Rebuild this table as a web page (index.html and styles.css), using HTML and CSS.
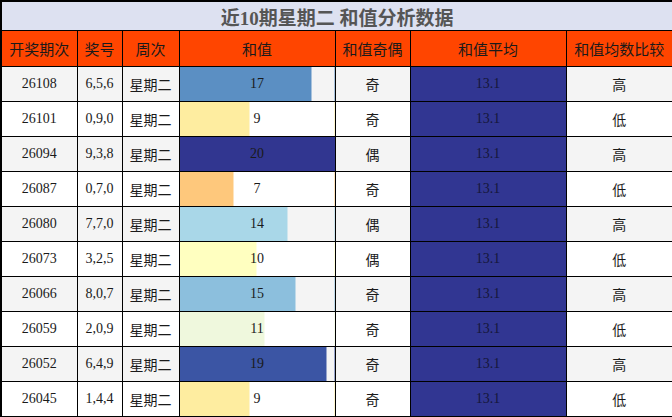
FILE: index.html
```html
<!DOCTYPE html>
<html lang="zh-CN">
<head>
<meta charset="utf-8">
<title>近10期星期二 和值分析数据</title>
<link rel="stylesheet" href="styles.css">
</head>
<body>
<table class="stats">
  <colgroup>
    <col class="c-issue"><col class="c-nums"><col class="c-week"><col class="c-sum"><col class="c-odd"><col class="c-avg"><col class="c-cmp">
  </colgroup>
  <thead>
    <tr class="title-row"><th colspan="7">近10期星期二 和值分析数据</th></tr>
    <tr class="head-row">
      <th>开奖期次</th><th>奖号</th><th>周次</th><th>和值</th><th>和值奇偶</th><th>和值平均</th><th>和值均数比较</th>
    </tr>
  </thead>
  <tbody>
    <tr><td>26108</td><td>6,5,6</td><td>星期二</td><td class="sum" style="--w:85%;--c:#5b8fc3">17</td><td>奇</td><td class="avg">13.1</td><td>高</td></tr>
    <tr><td>26101</td><td>0,9,0</td><td>星期二</td><td class="sum" style="--w:45%;--c:#feeda0">9</td><td>奇</td><td class="avg">13.1</td><td>低</td></tr>
    <tr><td>26094</td><td>9,3,8</td><td>星期二</td><td class="sum" style="--w:100%;--c:#313690">20</td><td>偶</td><td class="avg">13.1</td><td>高</td></tr>
    <tr><td>26087</td><td>0,7,0</td><td>星期二</td><td class="sum" style="--w:35%;--c:#fec87c">7</td><td>奇</td><td class="avg">13.1</td><td>低</td></tr>
    <tr><td>26080</td><td>7,7,0</td><td>星期二</td><td class="sum" style="--w:70%;--c:#a9d7e8">14</td><td>偶</td><td class="avg">13.1</td><td>高</td></tr>
    <tr><td>26073</td><td>3,2,5</td><td>星期二</td><td class="sum" style="--w:50%;--c:#ffffc0">10</td><td>偶</td><td class="avg">13.1</td><td>低</td></tr>
    <tr><td>26066</td><td>8,0,7</td><td>星期二</td><td class="sum" style="--w:75%;--c:#8cbfdd">15</td><td>奇</td><td class="avg">13.1</td><td>高</td></tr>
    <tr><td>26059</td><td>2,0,9</td><td>星期二</td><td class="sum" style="--w:55%;--c:#eff8dd">11</td><td>奇</td><td class="avg">13.1</td><td>低</td></tr>
    <tr><td>26052</td><td>6,4,9</td><td>星期二</td><td class="sum" style="--w:95%;--c:#3b55a4">19</td><td>奇</td><td class="avg">13.1</td><td>高</td></tr>
    <tr><td>26045</td><td>1,4,4</td><td>星期二</td><td class="sum" style="--w:45%;--c:#feeda0">9</td><td>奇</td><td class="avg">13.1</td><td>低</td></tr>
  </tbody>
</table>
</body>
</html>
```
FILE: styles.css
```css
html, body {
  margin: 0;
  padding: 0;
  background: #ffffff;
}

.stats {
  width: 672px;
  border-collapse: collapse;
  table-layout: fixed;
  border: 2px solid #000;
  font-family: "Liberation Serif", "Noto Sans CJK SC", serif;
  font-size: 14px;
  color: #1a1a1a;
}

.c-issue { width: 76px; }
.c-nums { width: 45px; }
.c-week { width: 57px; }
.c-sum { width: 156px; }
.c-odd { width: 75px; }
.c-avg { width: 156px; }
.c-cmp { width: 107px; }

.stats th,
.stats td {
  border: 1px solid #000;
  padding: 0;
  text-align: center;
  vertical-align: middle;
  white-space: nowrap;
  overflow: hidden;
}

.title-row th {
  height: 28px;
  background: #dde1f1;
  color: #555555;
  font-size: 19px;
  font-weight: bold;
}

.head-row th {
  height: 35px;
  background: #ff4500;
  color: #1a1a1a;
  font-family: "Noto Sans CJK SC", sans-serif;
  font-size: 15px;
  font-weight: normal;
}

.stats tbody td {
  height: 34px;
}

.stats tbody tr:nth-child(odd) td {
  background-color: #f4f4f4;
}

.stats tbody tr:nth-child(even) td {
  background-color: #ffffff;
}

.stats tbody tr td.sum {
  background-image: linear-gradient(to right, var(--c) var(--w), transparent var(--w));
}

.stats tbody tr:nth-child(n) td.avg {
  background-color: #313692;
  color: #15173a;
}
```
